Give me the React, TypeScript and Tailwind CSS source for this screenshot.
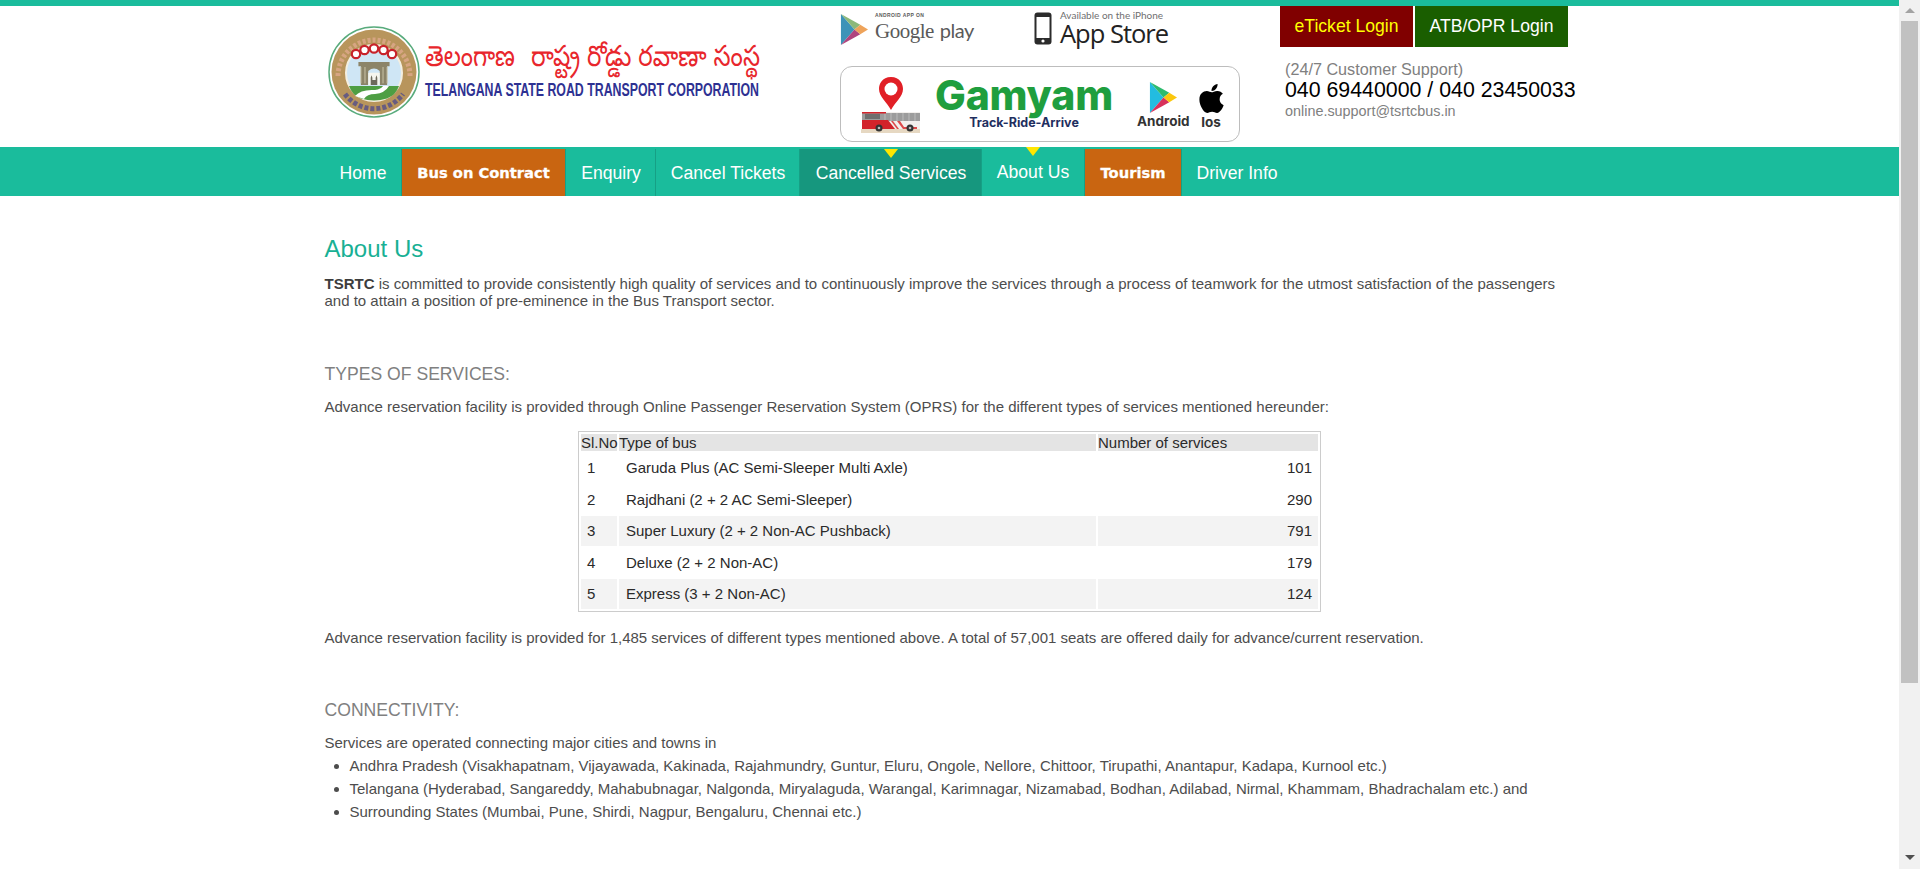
import { FaApple } from "react-icons/fa";

const NAV_ITEMS = [
    { label: "Home", className: "w-[77px]" },
    { label: "Bus on Contract", className: "w-[164px] bg-[#c96511]", special: true },
    { label: "Enquiry", className: "w-[90px] pl-[1px]" },
    { label: "Cancel Tickets", className: "w-[144px] pl-[1px]" },
    { label: "Cancelled Services", className: "w-[182px] pl-[1px] bg-[#16977e]", marker: "top-0" },
    { label: "About Us", className: "w-[103px]", marker: "-top-[2px]", raised: true },
    { label: "Tourism", className: "w-[97px] bg-[#c96511]", special: true },
    { label: "Driver Info", className: "w-[111px] pr-[1px] border-r-0" },
];

const BUS_ROWS = [
    { no: 1, type: "Garuda Plus (AC Semi-Sleeper Multi Axle)", count: 101 },
    { no: 2, type: "Rajdhani (2 + 2 AC Semi-Sleeper)", count: 290 },
    { no: 3, type: "Super Luxury (2 + 2 Non-AC Pushback)", count: 791 },
    { no: 4, type: "Deluxe (2 + 2 Non-AC)", count: 179 },
    { no: 5, type: "Express (3 + 2 Non-AC)", count: 124 },
];

const SCALLOPS = [
    [28, 28],
    [36.5, 24],
    [46, 22.5],
    [55.5, 24],
    [64, 28],
];

function Emblem() {
    return (
        <svg width="92" height="92" viewBox="0 0 92 92" className="shrink-0">
            <circle cx="46" cy="46" r="45" fill="#fff" stroke="#58ab7c" strokeWidth="1.5" />
            <circle cx="46" cy="46" r="42.5" fill="#b8955c" />
            {/* ring lettering, too small to read in the reference */}
            <path d="M10 50 a36 36 0 0 1 72 0" fill="none" stroke="#dfa98c" strokeWidth="5" strokeDasharray="3 2" opacity="0.8" />
            <path d="M17 68 a36 36 0 0 0 58 0" fill="none" stroke="#4d4a8c" strokeWidth="5" strokeDasharray="4 2" opacity="0.75" />
            <circle cx="46" cy="47" r="28" fill="#cfe6f5" stroke="#f4efe0" strokeWidth="2" />
            {SCALLOPS.map(([cx, cy]) => (
                <circle key={cx} cx={cx} cy={cy} r="4.2" fill="#fff" stroke="#c8222a" strokeWidth="2.2" />
            ))}
            <g transform="translate(46 50) scale(0.82) translate(-46 -50)">
                <path d="M27 33 h38 v5 h-3 v23 h-9 v-17 q-7 -6 -14 0 v17 h-9 v-23 h-3z" fill="#8c8468" />
                <path d="M30 39 v20 M35 39 v20 M57 39 v20 M62 39 v20" stroke="#ccc5a8" strokeWidth="1.2" />
                <path d="M39 46 h14 v15 h-14z" fill="#f5f5ee" />
                <path d="M42 61 v-9 l1 -3 1 3 v3 h4 v-3 l1 -3 1 3 v9z" fill="#6d6a5c" />
            </g>
            <path d="M21 60 h50 q-3 9 -12 12.500 q-13 4 -26 0 q-9 -3.500 -12 -12.500z" fill="#4e9e43" />
            <path d="M27 70 q6 -7 20 -6 q6 -1 8 -4 l6 0 q-4 7 -14 8 q-8 0 -11 5z" fill="#fff" />
        </svg>
    );
}

function Logo() {
    return (
        <div className="flex items-start pt-[20px] pl-[3px]">
            <Emblem />
            <svg width="338" height="80" viewBox="0 0 338 80" className="ml-[5px] mt-[10px] overflow-visible">
                <text x="0" y="30" fill="#e8262c" fontSize="29" fontFamily="'Noto Sans Telugu','Noto Sans',sans-serif" textLength="90" lengthAdjust="spacingAndGlyphs">తెలంగాణ</text>
                <text x="106" y="30" fill="#e8262c" fontSize="29" fontFamily="'Noto Sans Telugu','Noto Sans',sans-serif" textLength="229" lengthAdjust="spacingAndGlyphs">రాష్ట్ర రోడ్డు రవాణా సంస్థ</text>
                <text x="0" y="60" fill="#2e3192" fontSize="18" fontWeight="700" fontFamily="'Liberation Sans',sans-serif" textLength="334" lengthAdjust="spacingAndGlyphs">TELANGANA STATE ROAD TRANSPORT CORPORATION</text>
            </svg>
        </div>
    );
}

function PlayTriangle({ width, height, muted }: { width: number; height: number; muted?: boolean }) {
    return (
        <svg width={width} height={height} viewBox="0 0 30 34">
            <path d="M1 1 L15 17 L1 33z" fill={muted ? "#3d93b8" : "#22bce0"} />
            <path d="M1 1 L21 12 L15 17z" fill={muted ? "#8cb87a" : "#2dbb6e"} />
            <path d="M1 33 L21 22 L15 17z" fill={muted ? "#b0447e" : "#d8315b"} />
            <path d="M21 12 L29 17 L21 22 L15 17z" fill={muted ? "#eea35a" : "#fbc70d"} />
        </svg>
    );
}

function StoreLinks() {
    return (
        <div className="flex h-[44px] items-start">
            <div className="flex w-[194px] items-start">
                <div className="mt-[7px]">
                    <PlayTriangle width={29} height={33} muted />
                </div>
                <div className="ml-[6px] mt-[6px] flex flex-col text-[#5a5a5a]">
                    <span className="font-['Liberation_Sans',sans-serif] text-[5px] leading-[6px] font-bold tracking-[0.4px]">ANDROID APP ON</span>
                    <span className="font-['Liberation_Serif',serif] text-[21px] leading-[24px] -tracking-[0.5px]">Google<span className="ml-[6px] font-['Lato',sans-serif] text-[20px]">play</span></span>
                </div>
            </div>
            <div className="flex items-start">
                <svg width="18" height="33" viewBox="0 0 18 33" className="mt-[6px]">
                    <rect x="0.5" y="0.5" width="17" height="32" rx="3" fill="#2b2b2b" />
                    <rect x="2.5" y="5" width="13" height="21" fill="#fff" />
                    <circle cx="9" cy="29" r="1.6" fill="#fff" />
                </svg>
                <div className="ml-[8px] mt-[4px] flex flex-col">
                    <span className="font-['Lato',sans-serif] text-[10px] leading-[11px] text-[#6f6f6f]">Available on the iPhone</span>
                    <span className="font-['Open_Sans',sans-serif] text-[25.5px] leading-[25px] -tracking-[1px] text-[#222]">App Store</span>
                </div>
            </div>
        </div>
    );
}

function PinAndBus() {
    return (
        <svg width="60" height="56" viewBox="0 0 60 56">
            <path d="M30 0 C21 0 18 7 18 12 C18 20 26 25 30 33 C34 25 42 20 42 12 C42 7 39 0 30 0z" fill="#e11f26" />
            <circle cx="30" cy="12" r="6.5" fill="#fff" />
            <rect x="0" y="52" width="59" height="4" fill="#e6d8c2" />
            <rect x="1" y="35" width="58" height="17" fill="#f2efec" />
            <rect x="1" y="36" width="58" height="8" fill="#9c9c9c" />
            <path d="M4 37 h15 v5 h-15z" fill="#6e6e6e" />
            <path d="M24 36 v8 M30 36 v8 M36 36 v8 M42 36 v8 M48 36 v8 M54 36 v8" stroke="#c4c4c4" strokeWidth="0.8" />
            <path d="M1 43 h26 l7 9 h-33z" fill="#d2232a" />
            <path d="M1 35 h24 v1.5 h-24z" fill="#d2232a" />
            <path d="M30 44 l6 8 h2 l-6 -8z M36 44 l6 8 h14 v-2 h-13 l-4 -6z" fill="#dc4a4a" />
            <circle cx="18" cy="51" r="3.5" fill="#333" />
            <circle cx="18" cy="51" r="1.3" fill="#bbb" />
            <circle cx="49" cy="51" r="3.5" fill="#333" />
            <circle cx="49" cy="51" r="1.3" fill="#bbb" />
        </svg>
    );
}

function GamyamCard() {
    return (
        <div className="mt-[16px] flex h-[76px] w-[400px] items-center rounded-[12px] border border-[#bdbdbd] bg-white">
            <div className="ml-[20px] mt-[1px]">
                <PinAndBus />
            </div>
            <div className="ml-[14px] flex w-[178px] flex-col items-center pb-[2px]">
                <span className="font-['Inter',sans-serif] text-[41px] leading-[38px] font-extrabold -tracking-[0.2px] text-[#1f9e3e]">Gamyam</span>
                <span className="mt-[2px] font-['Inter',sans-serif] text-[12.5px] leading-[14px] font-bold text-[#1f2f5f]">Track-Ride-Arrive</span>
            </div>
            <div className="ml-[24px] flex flex-col items-center pt-[2px]">
                <PlayTriangle width={29} height={33} />
                <span className="font-['Inter',sans-serif] text-[13.5px] leading-[15px] font-bold text-[#333]">Android</span>
            </div>
            <div className="ml-[5px] flex flex-col items-center pt-[4px]">
                <FaApple className="text-[33px] text-black" />
                <span className="font-['Inter',sans-serif] text-[13.5px] leading-[15px] font-bold text-[#333]">Ios</span>
            </div>
        </div>
    );
}

function ContactBox() {
    return (
        <div className="shrink-0 whitespace-nowrap">
            <div className="flex gap-[2px]">
                <a className="flex h-[41px] w-[133px] items-center justify-center bg-[#800000] text-[17.6px] text-[#ffff00]">eTicket Login</a>
                <a className="flex h-[41px] w-[153px] items-center justify-center bg-[#1a5e00] text-[17.6px] text-white">ATB/OPR Login</a>
            </div>
            <div className="ml-[5px] mt-[13px] flex flex-col">
                <span className="text-[16.2px] leading-[18px] text-[#808080]">(24/7 Customer Support)</span>
                <span className="text-[21.33px] leading-[24px] text-black">040 69440000 / 040 23450033</span>
                <span className="mt-[1px] text-[14.4px] leading-[17px] text-[#808080]">online.support@tsrtcbus.in</span>
            </div>
        </div>
    );
}

function Navbar() {
    return (
        <nav className="h-[49px] bg-[#1abc9c] pt-[2px]">
            <ul className="mx-auto flex h-[47px] w-[1249px]">
                {NAV_ITEMS.map((item) => (
                    <li
                        key={item.label}
                        className={`relative flex items-center justify-center border-r border-[#16a085] ${item.className}`}
                    >
                        {item.marker && (
                            <span className={`absolute left-1/2 h-0 w-0 -translate-x-1/2 border-x-[7px] border-t-[9px] border-x-transparent border-t-[#ffe600] ${item.marker}`} />
                        )}
                        <a
                            className={
                                item.special
                                    ? "mt-[2px] font-['DejaVu_Sans',sans-serif] text-[14.7px] font-bold text-white [-webkit-text-stroke:0.3px_white]"
                                    : item.raised
                                      ? "text-[17.6px] text-white"
                                      : "mt-[2px] text-[17.6px] text-white"
                            }
                        >
                            {item.label}
                        </a>
                    </li>
                ))}
            </ul>
        </nav>
    );
}

function ServicesTable() {
    return (
        <div className="mx-auto mt-[16px] w-[743px] border border-[#ccc]">
            <table className="w-full table-fixed border-separate border-spacing-[2px] text-[15px] leading-[17px] text-[#2a2a2a]">
                <thead>
                    <tr className="bg-[#e4e4e4] text-left">
                        <th className="w-[36px] font-normal">Sl.No</th>
                        <th className="w-[477px] font-normal">Type of bus</th>
                        <th className="font-normal">Number of services</th>
                    </tr>
                </thead>
                <tbody>
                    {BUS_ROWS.map((row) => (
                        <tr key={row.no} className={row.no % 2 === 1 && row.no > 1 ? "bg-[#f3f3f3]" : ""}>
                            <td className="h-[29.5px] px-[6px]">{row.no}</td>
                            <td className="px-[7px]">{row.type}</td>
                            <td className="px-[6px] text-right">{row.count}</td>
                        </tr>
                    ))}
                </tbody>
            </table>
        </div>
    );
}

function Scrollbar() {
    return (
        <div className="flex h-[869px] w-[21px] shrink-0 flex-col items-center bg-[#f1f1f1]">
            <span className="mt-[8px] h-0 w-0 border-x-[5px] border-b-[5px] border-x-transparent border-b-[#a3a3a3]" />
            <div className="mt-[8px] h-[662px] w-[17px] bg-[#c1c1c1]" />
            <span className="mt-[172px] h-0 w-0 border-x-[5px] border-t-[5px] border-x-transparent border-t-[#505050]" />
        </div>
    );
}

export default function App() {
    return (
        <div className="flex h-[869px] w-full overflow-hidden bg-white font-['Liberation_Sans',Arial,sans-serif]">
            <div className="min-w-0 flex-1">
                <div className="h-[6px] bg-[#1abc9c]" />
                <header className="mx-auto flex h-[141px] w-[1249px]">
                    <div className="w-[515px] shrink-0">
                        <Logo />
                    </div>
                    <div className="w-[440px] shrink-0">
                        <StoreLinks />
                        <GamyamCard />
                    </div>
                    <ContactBox />
                </header>
                <Navbar />
                <main className="mx-auto w-[1250px] text-[15px] leading-[17px] text-[#4d4d4d]">
                    <h1 className="mt-[39px] text-[24px] leading-[28px] text-[#18b094]">About Us</h1>
                    <p className="mt-[12px]">
                        <strong className="text-[#3d3d3d]">TSRTC</strong> is committed to provide consistently high quality of services and to continuously improve the services through a process of teamwork for the utmost satisfaction of the passengers and to attain a position of pre-eminence in the Bus Transport sector.
                    </p>
                    <h2 className="mt-[55px] text-[17.6px] leading-[20px] text-[#808080]">TYPES OF SERVICES:</h2>
                    <p className="mt-[14px]">Advance reservation facility is provided through Online Passenger Reservation System (OPRS) for the different types of services mentioned hereunder:</p>
                    <ServicesTable />
                    <p className="mt-[17px]">Advance reservation facility is provided for 1,485 services of different types mentioned above. A total of 57,001 seats are offered daily for advance/current reservation.</p>
                    <h2 className="mt-[54px] text-[17.6px] leading-[20px] text-[#808080]">CONNECTIVITY:</h2>
                    <p className="mt-[14px]">Services are operated connecting major cities and towns in</p>
                    <ul className="mt-[3px] list-disc pl-[25px] leading-[23px]">
                        <li>Andhra Pradesh (Visakhapatnam, Vijayawada, Kakinada, Rajahmundry, Guntur, Eluru, Ongole, Nellore, Chittoor, Tirupathi, Anantapur, Kadapa, Kurnool etc.)</li>
                        <li>Telangana (Hyderabad, Sangareddy, Mahabubnagar, Nalgonda, Miryalaguda, Warangal, Karimnagar, Nizamabad, Bodhan, Adilabad, Nirmal, Khammam, Bhadrachalam etc.) and</li>
                        <li>Surrounding States (Mumbai, Pune, Shirdi, Nagpur, Bengaluru, Chennai etc.)</li>
                    </ul>
                </main>
            </div>
            <Scrollbar />
        </div>
    );
}
